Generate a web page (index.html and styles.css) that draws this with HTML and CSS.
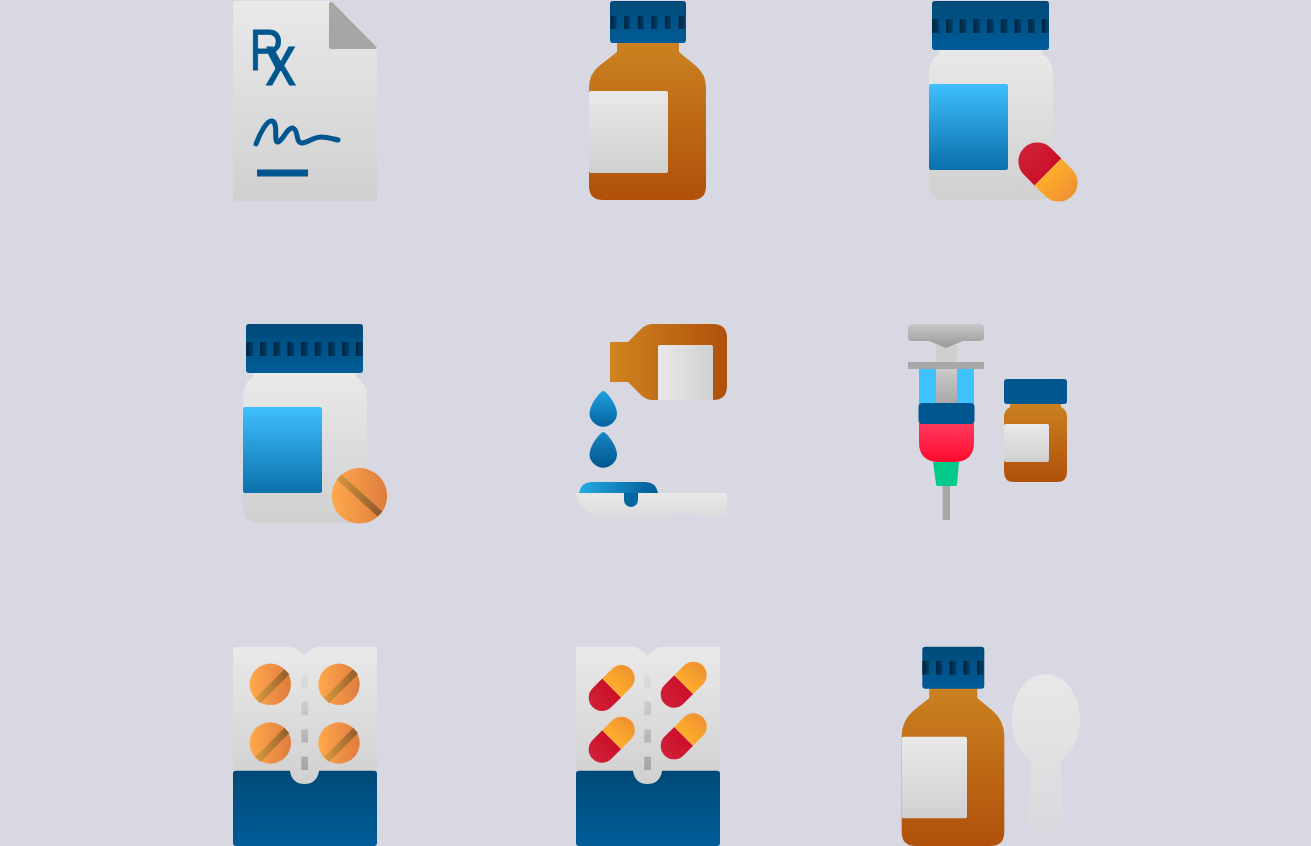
FILE: index.html
```html
<!DOCTYPE html>
<html lang="en">
<head>
<meta charset="utf-8">
<title>Pharmacy icons</title>
<link rel="stylesheet" href="styles.css">
</head>
<body>
<main class="icon-grid">

<!-- Prescription -->
<svg class="icon" viewBox="0 0 200 200" xmlns="http://www.w3.org/2000/svg">
  <defs>
    <linearGradient id="silver" x1="0" y1="0" x2="0" y2="1"><stop offset="0" stop-color="#e9e9e9"/><stop offset="1" stop-color="#d0d0d0"/></linearGradient>
    <linearGradient id="silverH" x1="0" y1="0" x2="1" y2="0"><stop offset="0" stop-color="#e9e9e9"/><stop offset="1" stop-color="#d0d0d0"/></linearGradient>
    <linearGradient id="amber" x1="0" y1="0" x2="0" y2="1"><stop offset="0" stop-color="#cb8220"/><stop offset="1" stop-color="#b0500b"/></linearGradient>
    <linearGradient id="amberH" x1="0" y1="0" x2="1" y2="0"><stop offset="0" stop-color="#d0841f"/><stop offset="1" stop-color="#b0500b"/></linearGradient>
    <linearGradient id="navy" x1="0" y1="0" x2="0" y2="1"><stop offset="0" stop-color="#004a78"/><stop offset="1" stop-color="#005c98"/></linearGradient>
    <linearGradient id="tooth" x1="0" y1="0" x2="1" y2="0"><stop offset="0" stop-color="#00233f"/><stop offset="1" stop-color="#00406a"/></linearGradient>
    <linearGradient id="sky" x1="0" y1="0" x2="0" y2="1"><stop offset="0" stop-color="#40bfff"/><stop offset="1" stop-color="#0a70aa"/></linearGradient>
    <linearGradient id="red" x1="0" y1="0" x2="1" y2="0"><stop offset="0" stop-color="#cf2138"/><stop offset="1" stop-color="#cc0f2a"/></linearGradient>
    <linearGradient id="orange" x1="0" y1="0" x2="1" y2="0"><stop offset="0" stop-color="#ffae2c"/><stop offset="1" stop-color="#ef9130"/></linearGradient>
    <linearGradient id="pill" x1="0" y1="0" x2="1" y2="0"><stop offset="0" stop-color="#ffa94c"/><stop offset="1" stop-color="#df7c3e"/></linearGradient>
    <linearGradient id="score" x1="0" y1="0" x2="1" y2="0"><stop offset="0" stop-color="#d5923e"/><stop offset="1" stop-color="#8f5a2a"/></linearGradient>
    <linearGradient id="scoreUp" x1="0" y1="0" x2="1" y2="0"><stop offset="0" stop-color="#d9963f"/><stop offset="1" stop-color="#95602c"/></linearGradient>
    <linearGradient id="drop1" x1="0" y1="0" x2="0" y2="1"><stop offset="0" stop-color="#1fa2e0"/><stop offset="1" stop-color="#06629e"/></linearGradient>
    <linearGradient id="drop2" x1="0" y1="0" x2="0" y2="1"><stop offset="0" stop-color="#1a86c4"/><stop offset="1" stop-color="#00578f"/></linearGradient>
    <linearGradient id="pool" x1="0" y1="0" x2="1" y2="0"><stop offset="0" stop-color="#24aae4"/><stop offset="1" stop-color="#005b96"/></linearGradient>
    <linearGradient id="spoonFade" x1="0" y1="0" x2="0" y2="1"><stop offset="0" stop-color="#e8e8e8"/><stop offset="1" stop-color="#d9d9de"/></linearGradient>
    <linearGradient id="steel" x1="0" y1="0" x2="0" y2="1"><stop offset="0" stop-color="#c8c8c8"/><stop offset="1" stop-color="#989898"/></linearGradient>
    <linearGradient id="rod" x1="0" y1="0" x2="0" y2="1"><stop offset="0" stop-color="#cbcbcb"/><stop offset="1" stop-color="#a6a6a6"/></linearGradient>
    <linearGradient id="serum" x1="0" y1="0" x2="0" y2="1"><stop offset="0" stop-color="#ff3a5f"/><stop offset="1" stop-color="#ff0a2e"/></linearGradient>
    <linearGradient id="dashes" gradientUnits="userSpaceOnUse" x1="0" y1="28" x2="0" y2="124"><stop offset="0" stop-color="#dedede"/><stop offset="1" stop-color="#a4a4a4"/></linearGradient>

    <g id="teeth6" fill="url(#tooth)">
      <rect x="62.600" y="16" width="6" height="13"/><rect x="76.200" y="16" width="6" height="13"/><rect x="89.800" y="16" width="6" height="13"/><rect x="103.400" y="16" width="6" height="13"/><rect x="117" y="16" width="6" height="13"/><rect x="130.600" y="16" width="6.400" height="13"/>
    </g>
    <g id="wide-jar">
      <path d="M48 49H151V54Q162 60 162 74V184Q162 200 146 200H54Q38 200 38 184V74Q38 60 48 54Z" fill="url(#silver)"/>
      <rect x="41" y="1" width="117" height="49" rx="3" fill="url(#navy)"/>
      <g fill="url(#tooth)">
        <rect x="41.300" y="19" width="6.800" height="14"/><rect x="55" y="19" width="6.800" height="14"/><rect x="68.700" y="19" width="6.800" height="14"/><rect x="82.400" y="19" width="6.800" height="14"/><rect x="96.100" y="19" width="6.800" height="14"/><rect x="109.800" y="19" width="6.800" height="14"/><rect x="123.500" y="19" width="6.800" height="14"/><rect x="137.200" y="19" width="6.800" height="14"/><rect x="150.900" y="19" width="6.800" height="14"/>
      </g>
      <path d="M38 86Q38 84 40 84H115Q117 84 117 86V168Q117 170 115 170H40Q38 170 38 168Z" fill="url(#sky)"/>
    </g>
    <g id="blister">
      <path d="M30 .7H88L99.300 9.300 110.700 .7H170Q172 .7 172 2.700V140H28V2.700Q28 .7 30 .7Z" fill="url(#silver)"/>
      <g fill="url(#dashes)">
        <rect x="96.300" y="28.300" width="6.700" height="13.400"/><rect x="96.300" y="55.700" width="6.700" height="13.600"/><rect x="96.300" y="83.300" width="6.700" height="13.400"/><rect x="96.300" y="110.700" width="6.700" height="13.300"/>
      </g>
      <path d="M31 124.700H85C86 133 91 138 99.500 138 108 138 113 133 114 124.700H169Q172 124.700 172 127.700V197Q172 200 169 200H31Q28 200 28 197V127.700Q28 124.700 31 124.700Z" fill="url(#navy)"/>
    </g>
    <g id="tablet">
      <circle r="20.700" fill="url(#pill)"/>
      <path d="M-12.500 16.500 16.500 -12.500" stroke="url(#scoreUp)" stroke-width="7" fill="none"/>
    </g>
    <g id="capsule">
      <path d="M0 -13.300H-13.700A13.300 13.300 0 0 0 -13.700 13.300H0Z" fill="url(#red)"/>
      <path d="M0 -13.300H13.700A13.300 13.300 0 0 1 13.700 13.300H0Z" fill="url(#orange)"/>
    </g>
  </defs>
  <path d="M31 1H124L172 48V198Q172 201 169 201H31Q28 201 28 198V4Q28 1 31 1Z" fill="url(#silver)"/>
  <path d="M126 2Q124 2 124 4V47Q124 49 126 49H170Q173 49 171 46.500L128 3Q127 2 126 2Z" fill="#a6a6a6"/>
  <text class="rx" transform="translate(44.200 70) scale(.85 1)" fill="#00578f" stroke="#00578f" stroke-width=".8">R<tspan class="rx-x" dx="-22" dy="15">x</tspan></text>
  <path d="M51 144C55 133 62 120 67 121 74 123 68 143 73 142 78 141 82 127 88 128 94 130 90 143 97 143 103 143 108 137 116 137 123 137 128 139 133 140" fill="none" stroke="#00578f" stroke-width="5" stroke-linecap="round" stroke-linejoin="round"/>
  <rect x="52" y="169.500" width="51" height="7" fill="#00578f"/>
</svg>

<!-- Amber bottle -->
<svg class="icon" viewBox="0 0 200 200" xmlns="http://www.w3.org/2000/svg">
  <path d="M69 42H131V52L148 66Q158 74 158 88V186Q158 200 144 200H55Q41 200 41 186V88Q41 74 51 66L69 52Z" fill="url(#amber)"/>
  <path d="M41 93Q41 91 43 91H118Q120 91 120 93V171Q120 173 118 173H43Q41 173 41 171Z" fill="url(#silver)"/>
  <rect x="62" y="1" width="76" height="42" rx="3" fill="url(#navy)"/>
  <use href="#teeth6"/>
</svg>

<!-- Jar and capsule -->
<svg class="icon" viewBox="0 0 200 200" xmlns="http://www.w3.org/2000/svg">
  <use href="#wide-jar"/>
  <g transform="translate(157 172) rotate(45)">
    <path d="M0 -19H-15A19 19 0 0 0 -15 19H0Z" fill="url(#red)"/>
    <path d="M0 -19H15A19 19 0 0 1 15 19H0Z" fill="url(#orange)"/>
  </g>
</svg>

<!-- Jar and tablet -->
<svg class="icon" viewBox="0 0 200 200" xmlns="http://www.w3.org/2000/svg">
  <use href="#wide-jar"/>
  <circle cx="154.500" cy="172.800" r="27.700" fill="url(#pill)"/>
  <path d="M134 154 175 191" stroke="url(#score)" stroke-width="7" fill="none"/>
</svg>

<!-- Pouring bottle -->
<svg class="icon" viewBox="0 0 200 200" xmlns="http://www.w3.org/2000/svg">
  <path d="M63 19H80L93 6Q98 1 105 1H165Q179 1 179 15V63Q179 77 165 77H105Q98 77 93 72L80 59H63Q62 59 62 58V20Q62 19 63 19Z" fill="url(#amberH)"/>
  <path d="M110 24Q110 22 112 22H163Q165 22 165 24V77H110Z" fill="url(#silverH)"/>
  <path d="M55.300 68C58 68 69 81 69 91A13.800 13.800 0 0 1 41.500 91C41.500 81 52.600 68 55.300 68Z" fill="url(#drop1)"/>
  <path d="M55.300 109C58 109 69 122 69 132A13.800 13.800 0 0 1 41.500 132C41.500 122 52.600 109 55.300 109Z" fill="url(#drop2)"/>
  <path d="M31 170Q33 159 44 159H97Q108 159 110 170Z" fill="url(#pool)"/>
  <path d="M28 171Q28 170 29 170H177Q179 170 179 172V196L132 190C118 195 100 200 79 200 50 200 32 187 28 171Z" fill="url(#spoonFade)"/>
  <path d="M76 170H90V177A7 7 0 0 1 76 177Z" fill="#00689f"/>
</svg>

<!-- Syringe and vial -->
<svg class="icon" viewBox="0 0 200 200" xmlns="http://www.w3.org/2000/svg">
  <rect x="45" y="22" width="21" height="18" fill="#cfcfcf"/>
  <path d="M21 1H89Q93 1 93 5V15Q93 18 89 18H72L55 25 38 18H21Q17 18 17 15V5Q17 1 21 1Z" fill="url(#steel)"/>
  <rect x="28" y="46" width="55" height="36" fill="#3fc3ff"/>
  <rect x="45" y="46" width="21" height="36" fill="url(#rod)"/>
  <rect x="17" y="39" width="76" height="7" fill="#a8a8a8"/>
  <path d="M28 100H83V119Q83 139 63 139H48Q28 139 28 119Z" fill="url(#serum)"/>
  <rect x="27.500" y="80" width="56" height="21" rx="4" fill="#00578f"/>
  <path d="M42 139H68L66 161Q66 163 64 163H47Q45 163 45 161Z" fill="#00c98a"/>
  <rect x="51.700" y="163" width="7.300" height="34" fill="#a6a6a6"/>
  <path d="M119 79H170V84Q176 87 176 94V149Q176 159 166 159H123Q113 159 113 149V94Q113 87 119 84Z" fill="url(#amber)"/>
  <path d="M113 103Q113 101 115 101H156Q158 101 158 103V137Q158 139 156 139H115Q113 139 113 137Z" fill="url(#silver)"/>
  <rect x="113" y="56" width="63" height="25" rx="3" fill="#00578f"/>
</svg>

<!-- Tablet blister -->
<svg class="icon" viewBox="0 0 200 200" xmlns="http://www.w3.org/2000/svg">
  <use href="#blister"/>
  <use href="#tablet" x="65.300" y="38.300"/>
  <use href="#tablet" x="134" y="38.300"/>
  <use href="#tablet" x="65.300" y="97"/>
  <use href="#tablet" x="134" y="97"/>
</svg>

<!-- Capsule blister -->
<svg class="icon" viewBox="0 0 200 200" xmlns="http://www.w3.org/2000/svg">
  <use href="#blister"/>
  <g transform="translate(63.700 42) rotate(-45)"><use href="#capsule"/></g>
  <g transform="translate(135.700 38.700) rotate(-45)"><use href="#capsule"/></g>
  <g transform="translate(63.700 93.700) rotate(-45)"><use href="#capsule"/></g>
  <g transform="translate(135.700 90.300) rotate(-45)"><use href="#capsule"/></g>
</svg>

<!-- Bottle and spoon -->
<svg class="icon" viewBox="0 0 200 200" xmlns="http://www.w3.org/2000/svg">
  <path d="M38.300 41H86.300V52L102 65Q113.300 75 113.300 90V186Q113.300 200 99 200H25Q10.700 200 10.700 186V90Q10.700 75 22 65L38.300 52Z" fill="url(#amber)"/>
  <path d="M10.700 92.700Q10.700 90.700 12.700 90.700H74Q76 90.700 76 92.700V170.300Q76 172.300 74 172.300H12.700Q10.700 172.300 10.700 170.300Z" fill="url(#silver)"/>
  <rect x="31.300" y=".7" width="62" height="42" rx="3" fill="url(#navy)"/>
  <g fill="url(#tooth)">
    <rect x="31.500" y="14.700" width="6.500" height="14"/><rect x="45" y="14.700" width="6.500" height="14"/><rect x="58.700" y="14.700" width="6.500" height="14"/><rect x="72.400" y="14.700" width="6.500" height="14"/><rect x="86.100" y="14.700" width="6.500" height="14"/>
  </g>
  <path d="M154.800 28.300C174 28.300 189 50 189 72 189 92 180 108 169.500 115L171.700 172A17.200 17.200 0 0 1 137.300 172L140 115C129 108 120.700 92 120.700 72 120.700 50 135 28.300 154.800 28.300Z" fill="url(#spoonFade)"/>
</svg>

</main>
</body>
</html>
```

FILE: styles.css
```css
html, body {
  margin: 0;
  height: 100%;
  background: #d7d8e1;
  overflow: hidden;
}

.icon-grid {
  display: grid;
  grid-template-columns: repeat(3, 200px);
  grid-auto-rows: 200px;
  column-gap: 143px;
  row-gap: 123px;
  padding-left: 205px;
}

.icon {
  display: block;
  width: 200px;
  height: 200px;
  overflow: visible;
  filter: blur(0.45px);
}

.rx {
  font-family: "Liberation Sans", Arial, sans-serif;
  font-size: 57px;
}

.rx-x {
  font-size: 72px;
}
```
